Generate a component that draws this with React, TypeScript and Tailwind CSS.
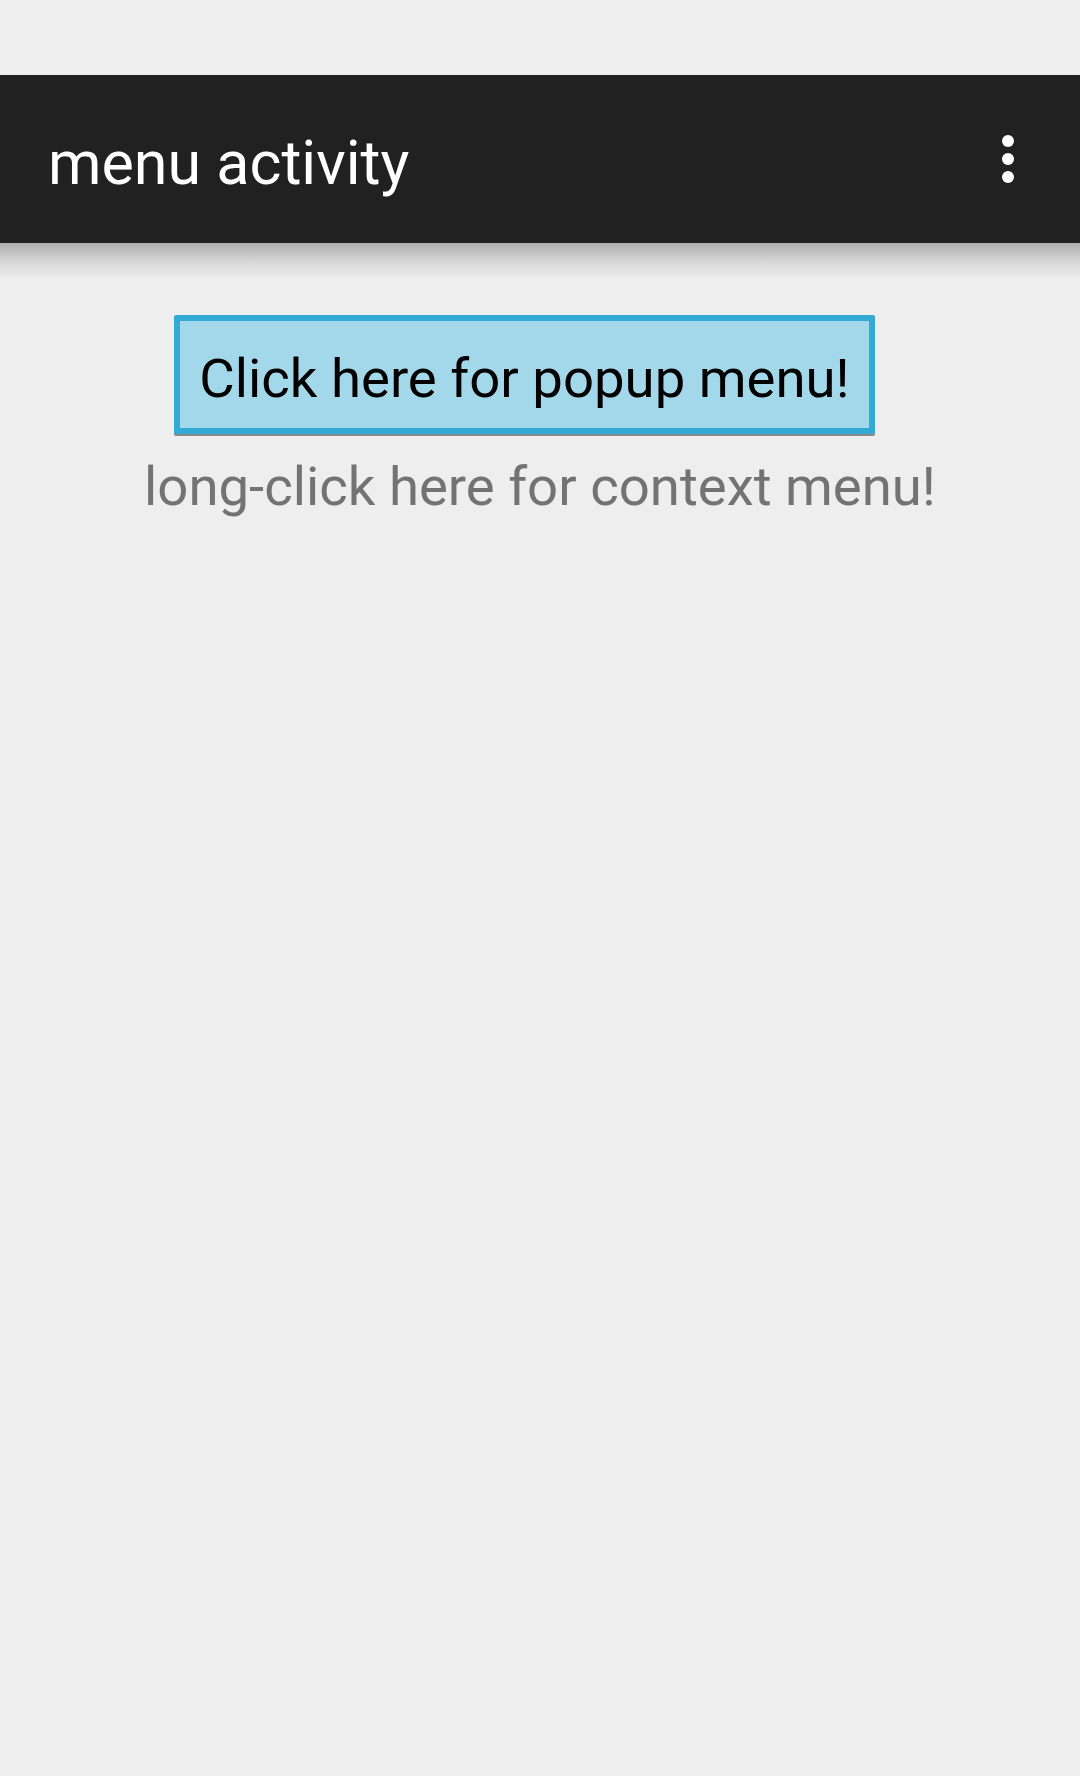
export default function App() {
  return (
    <div className="min-h-screen w-full bg-[#eeeeee] font-['Roboto',sans-serif]">
      {/* status bar (empty) */}
      <div className="h-[75px] bg-[#eeeeee]" />

      {/* action bar */}
      <div className="h-[168px] bg-[#212121] flex items-center justify-between pl-[48px] pr-[66px]">
        <h1 className="text-[61px] leading-[72px] text-white mt-[7px]">menu activity</h1>
        <svg width="12" height="48" viewBox="0 0 12 48">
          <circle cx="6" cy="6" r="6" fill="#fff" />
          <circle cx="6" cy="24" r="6" fill="#fff" />
          <circle cx="6" cy="42" r="6" fill="#fff" />
        </svg>
      </div>
      <div className="h-[36px] bg-linear-to-b from-[#acacac] via-[#d6d6d6] to-[#eeeeee]" />

      <div className="flex flex-col items-center pt-[36px]">
        <button
          type="button"
          className="mr-[31px] border-[6px] border-[#33aad4] bg-[#a3d8ea] rounded-[2px] px-[19px] pt-[26px] pb-[18px] text-[54.5px] leading-[63px] text-black shadow-[0_2px_0_#8a8a8a]"
        >
          Click here for popup menu!
        </button>
        <p className="mt-[21px] text-[54.5px] leading-[63px] text-[#737373]">
          long-click here for context menu!
        </p>
      </div>
    </div>
  );
}
